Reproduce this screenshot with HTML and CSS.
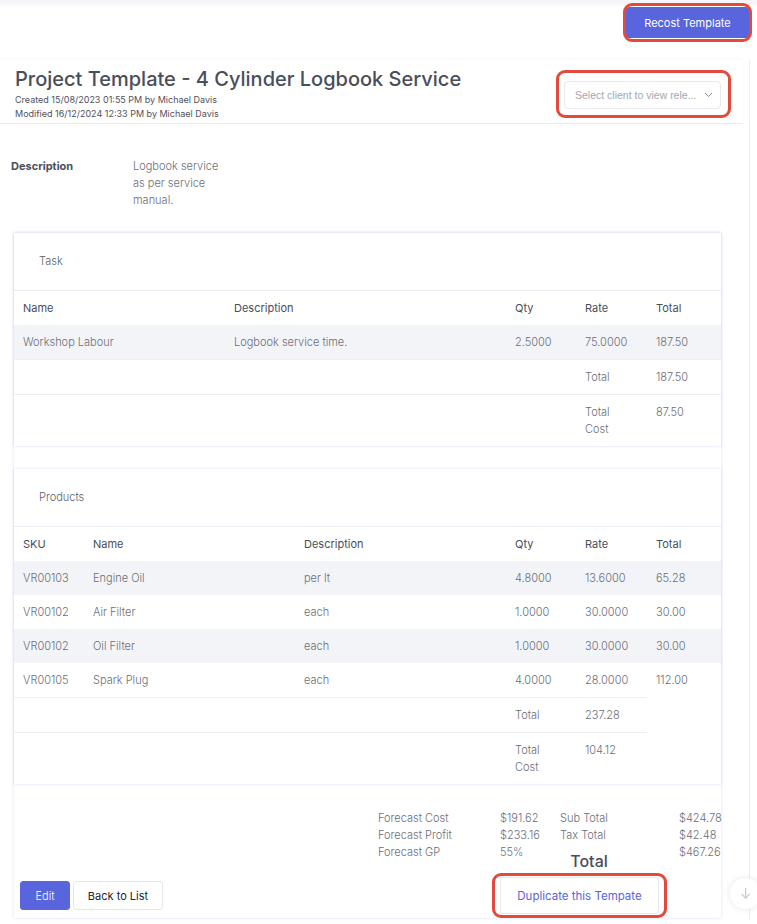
FILE: index.html
```html
<!DOCTYPE html>
<html>
<head>
    <meta name="viewport" content="width=device-width, initial-scale=1">
    <link rel="stylesheet" href="styles.css">
</head>
<body>
    <div class="topbar"></div>
    <div class="actions">
        <button class="btn btn-primary btn-recost flag">Recost Template</button>
    </div>

    <div class="page">
        <div class="page-header">
            <div class="title-block">
                <h1>Project Template - 4 Cylinder Logbook Service</h1>
                <div class="meta">Created 15/08/2023 01:55 PM by Michael Davis</div>
                <div class="meta">Modified 16/12/2024 12:33 PM by Michael Davis</div>
            </div>
            <div class="client-select flag flag-select">
                <span>Select client to view rele...</span>
                <svg width="9" height="6" viewBox="0 0 9 6"><polyline points="1,1 4.5,4.5 8,1" fill="none" stroke="#8a8a94" stroke-width="1"/></svg>
            </div>
        </div>

        <div class="page-body">
            <div class="desc">
                <div class="desc-label">Description</div>
                <div class="desc-text">Logbook service as per service manual.</div>
            </div>

            <div class="detail">
                <!-- tareas -->
                <div class="section">
                    <div class="section-title">Task</div>
                    <table class="grid task-grid">
                        <thead>
                            <tr>
                                <th>Name</th>
                                <th>Description</th>
                                <th>Qty</th>
                                <th>Rate</th>
                                <th>Total</th>
                            </tr>
                        </thead>
                        <tbody>
                            <tr class="striped">
                                <td>Workshop Labour</td>
                                <td>Logbook service time.</td>
                                <td>2.5000</td>
                                <td>75.0000</td>
                                <td>187.50</td>
                            </tr>
                            <tr class="total-row">
                                <td></td>
                                <td></td>
                                <td></td>
                                <td>Total</td>
                                <td>187.50</td>
                            </tr>
                            <tr class="total-row">
                                <td></td>
                                <td></td>
                                <td></td>
                                <td>Total<br>Cost</td>
                                <td>87.50</td>
                            </tr>
                        </tbody>
                    </table>
                </div>

                <!-- productos -->
                <div class="section">
                    <div class="section-title">Products</div>
                    <table class="grid product-grid">
                        <thead>
                            <tr>
                                <th>SKU</th>
                                <th>Name</th>
                                <th>Description</th>
                                <th>Qty</th>
                                <th>Rate</th>
                                <th>Total</th>
                            </tr>
                        </thead>
                        <tbody>
                            <tr class="striped">
                                <td>VR00103</td>
                                <td>Engine Oil</td>
                                <td>per lt</td>
                                <td>4.8000</td>
                                <td>13.6000</td>
                                <td>65.28</td>
                            </tr>
                            <tr>
                                <td>VR00102</td>
                                <td>Air Filter</td>
                                <td>each</td>
                                <td>1.0000</td>
                                <td>30.0000</td>
                                <td>30.00</td>
                            </tr>
                            <tr class="striped">
                                <td>VR00102</td>
                                <td>Oil Filter</td>
                                <td>each</td>
                                <td>1.0000</td>
                                <td>30.0000</td>
                                <td>30.00</td>
                            </tr>
                            <tr>
                                <td>VR00105</td>
                                <td>Spark Plug</td>
                                <td>each</td>
                                <td>4.0000</td>
                                <td>28.0000</td>
                                <td>112.00</td>
                            </tr>
                            <tr class="total-row">
                                <td colspan="3"></td>
                                <td>Total</td>
                                <td>237.28</td>
                            </tr>
                            <tr class="total-row">
                                <td colspan="3"></td>
                                <td>Total<br>Cost</td>
                                <td>104.12</td>
                            </tr>
                        </tbody>
                    </table>
                </div>

                <div class="summary">
                    <span>Forecast Cost</span><span>$191.62</span><span>Sub Total</span><span>$424.78</span>
                    <span>Forecast Profit</span><span>$233.16</span><span>Tax Total</span><span>$42.48</span>
                    <span>Forecast GP</span><span>55%</span><span></span><span>$467.26</span>
                </div>
                <div class="summary-total">Total</div>

                <div class="footer">
                    <button class="btn btn-primary btn-edit">Edit</button>
                    <button class="btn btn-light">Back to List</button>
                    <button class="btn btn-outline flag flag-dup">Duplicate this Tempate</button>
                </div>
            </div>
        </div>
    </div>

    <div class="scroll-btn">&#8595;</div>
</body>
</html>
```

FILE: styles.css
```css
body {
    margin: 0;
    background-color: #fff;
    font-family: Inter, "Open Sans", sans-serif;
    color: #6b6e78;
    min-height: 924px;
    overflow: hidden;
}

.topbar {
    height: 4px;
    background-color: #f6f6fa;
    box-shadow: 0 1px 4px rgba(60, 60, 120, 0.06);
}

.actions {
    display: flex;
    justify-content: flex-end;
    padding: 3px 8px 0 0;
}

.btn {
    font-family: inherit;
    font-size: 11px;
    border-radius: 3px;
    cursor: pointer;
    box-sizing: border-box;
}

.btn-primary {
    background-color: #5865dc;
    color: #fff;
    border: 1px solid #5865dc;
    font-weight: 400;
}

.btn-recost {
    width: 123px;
    height: 31px;
}

/* marcas rojas de anotacion */
.flag {
    position: relative;
}

.flag::after {
    content: "";
    position: absolute;
    top: -5px;
    bottom: -5px;
    left: -4px;
    right: -4px;
    border: 3px solid #e24a3b;
    border-radius: 9px;
    pointer-events: none;
}

.flag-select::after {
    top: -12px;
    bottom: -10px;
    left: -9px;
    right: -11px;
}

.flag-dup::after {
    top: -5px;
    bottom: -5px;
    left: -9px;
    right: -9px;
}

.page {
    width: 750px;
    margin-top: 22px;
    min-height: 860px;
    border-right: 1px solid #ecebf6;
    box-sizing: border-box;
}

.page-header {
    display: flex;
    justify-content: space-between;
    align-items: flex-start;
    width: 743px;
    box-sizing: border-box;
    padding: 6px 22px 2px 15px;
    border-bottom: 1px solid #ebebf0;
    box-shadow: 0 -1px 3px rgba(80, 80, 160, 0.05);
}

.page-header h1 {
    margin: 0;
    font-size: 20px;
    line-height: 27px;
    font-weight: 500;
    color: #4a4e5a;
}

.meta {
    font-size: 9px;
    line-height: 14px;
    color: #4f525c;
}

.client-select {
    display: flex;
    align-items: center;
    justify-content: space-between;
    width: 157px;
    height: 28px;
    box-sizing: border-box;
    margin-top: 15px;
    padding: 0 7px 0 10px;
    border: 1px solid #e8e8ee;
    border-radius: 4px;
    font-family: "Liberation Sans", Arial, sans-serif;
    font-size: 10.5px;
    color: #a6a6ae;
}

.page-body {
    padding: 34px 0 0 11px;
}

.desc {
    display: flex;
    font-size: 11px;
    line-height: 17px;
}

.desc-label {
    width: 122px;
    font-weight: 700;
    color: #4d505a;
}

.desc-text {
    width: 92px;
    font-weight: 300;
}

.detail {
    width: 707px;
    margin: 24px 0 0 3px;
    box-shadow: 0 0 3px rgba(110, 100, 220, 0.22);
}

.section {
    box-shadow: 0 0 3px rgba(110, 100, 220, 0.22);
    margin-bottom: 23px;
}

.section-title {
    padding: 20px 25px;
    font-size: 11px;
    line-height: 17px;
    font-weight: 300;
    color: #5c5f68;
    border-bottom: 1px solid #ececf4;
}

.grid {
    width: 100%;
    border-collapse: collapse;
    table-layout: fixed;
    font-size: 11px;
    line-height: 17px;
}

.grid th,
.grid td {
    padding: 9px 9px 8px;
    text-align: left;
    vertical-align: top;
}

.grid th {
    font-weight: 400;
    color: #4a4d57;
}

.grid td {
    font-weight: 300;
    color: #6b6e78;
}

.grid tr.striped td {
    background-color: #f3f4f8;
}

.grid tr.total-row td {
    border-top: 1px solid #eeeff5;
}

.task-grid th:nth-child(1) { width: 193px; }
.task-grid th:nth-child(2) { width: 263px; }
.task-grid th:nth-child(3) { width: 52px; }
.task-grid th:nth-child(4) { width: 53px; }

.product-grid th:nth-child(1) { width: 52px; }
.product-grid th:nth-child(2) { width: 193px; }
.product-grid th:nth-child(3) { width: 193px; }
.product-grid th:nth-child(4) { width: 52px; }
.product-grid th:nth-child(5) { width: 53px; }

.summary {
    display: grid;
    grid-template-columns: 122px 60px 119px auto;
    margin: 26px 0 0 364px;
    font-size: 11px;
    line-height: 17px;
    font-weight: 300;
    color: #6b6e78;
    white-space: nowrap;
}

.summary-total {
    width: 100px;
    margin: -9px 0 0 525px;
    text-align: center;
    font-size: 16px;
    line-height: 18px;
    font-weight: 500;
    color: #4a4d57;
}

.footer {
    display: flex;
    align-items: center;
    padding: 7px 0 4px 6px;
}

.btn-edit {
    width: 50px;
    height: 29px;
    font-weight: 300;
}

.btn-light {
    width: 90px;
    height: 29px;
    margin-left: 3px;
    background-color: #fff;
    border: 1px solid #e6e6ef;
    color: #23252b;
}

.btn-outline {
    width: 159px;
    height: 37px;
    margin-left: auto;
    margin-right: 62px;
    background-color: #fff;
    border: 1px solid #e6e6ef;
    color: #5865dc;
    font-size: 11.5px;
    font-weight: 400;
}

.scroll-btn {
    position: fixed;
    left: 730px;
    top: 878px;
    width: 31px;
    height: 31px;
    border-radius: 50%;
    background-color: #fff;
    box-shadow: 0 0 6px rgba(60, 60, 110, 0.12);
    color: #c8c8d0;
    font-size: 14px;
    line-height: 31px;
    text-align: center;
}
```
